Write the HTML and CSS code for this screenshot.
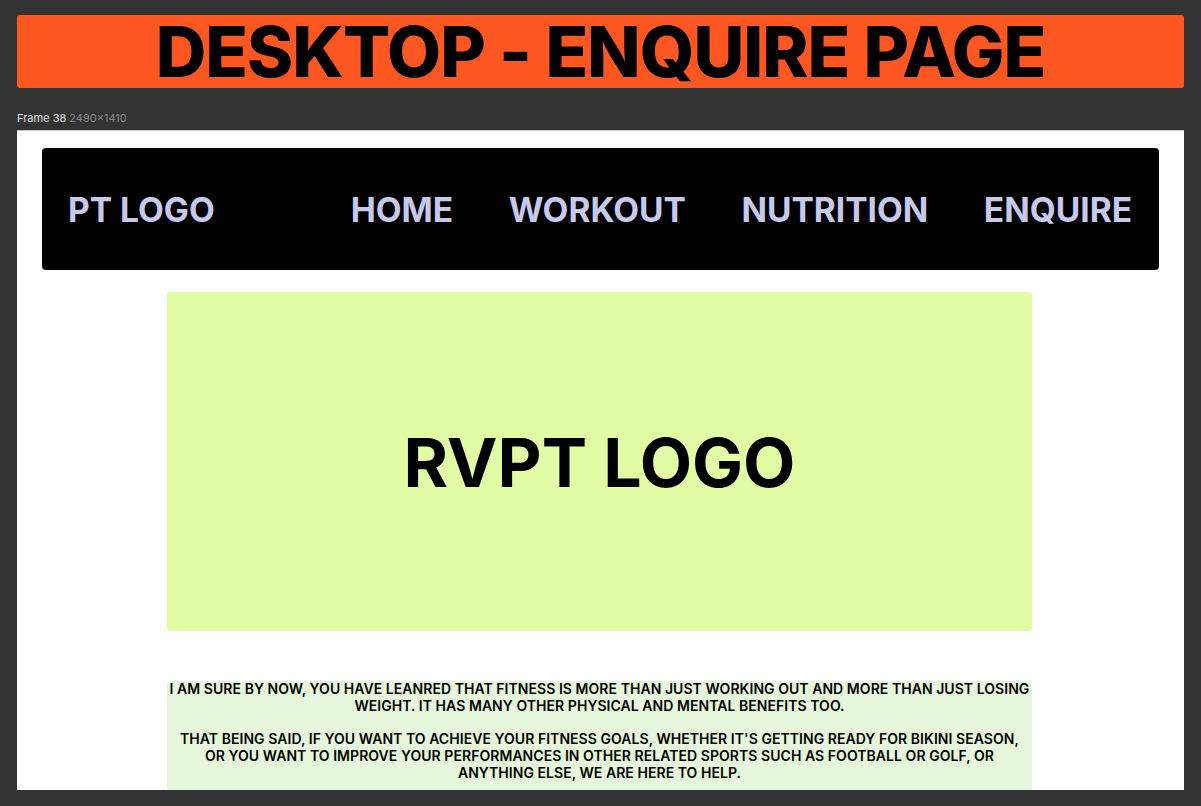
FILE: index.html
```html
<!DOCTYPE html>
<html>
<head>
<meta charset="utf-8">
<link rel="stylesheet" href="styles.css">
</head>
<body>
<div class="banner"><h1 class="banner-title">DESKTOP - ENQUIRE PAGE</h1></div>
<div class="frame-label"><span class="frame-name">Frame 38</span> <span class="frame-size">2490×1410</span></div>
<div class="frame">
  <nav class="nav">
    <div class="nav-logo">PT LOGO</div>
    <div class="nav-links">
      <a class="nav-link">HOME</a>
      <a class="nav-link">WORKOUT</a>
      <a class="nav-link">NUTRITION</a>
      <a class="nav-link">ENQUIRE</a>
    </div>
  </nav>
  <div class="hero"><div class="hero-text">RVPT LOGO</div></div>
  <div class="intro">
    <p class="intro-text">I AM SURE BY NOW, YOU HAVE LEANRED THAT FITNESS IS MORE THAN JUST WORKING OUT AND MORE THAN JUST LOSING WEIGHT. IT HAS MANY OTHER PHYSICAL AND MENTAL BENEFITS TOO.<br><br>THAT BEING SAID, IF YOU WANT TO ACHIEVE YOUR FITNESS GOALS, WHETHER IT'S GETTING READY FOR BIKINI SEASON,<br>OR YOU WANT TO IMPROVE YOUR PERFORMANCES IN OTHER RELATED SPORTS SUCH AS FOOTBALL OR GOLF, OR<br>ANYTHING ELSE, WE ARE HERE TO HELP.</p>
  </div>
</div>
</body>
</html>
```
FILE: styles.css
```css
* { box-sizing: border-box; }
html, body { margin: 0; padding: 0; }
body {
  background: #333333;
  font-family: Inter, "Noto Sans", sans-serif;
  width: 1201px;
  height: 806px;
  overflow: hidden;
}
.banner {
  margin: 15px 17px 0 17px;
  height: 73px;
  background: #ff5722;
  border-radius: 3px;
  display: flex;
  align-items: center;
  justify-content: center;
}
.banner-title {
  margin: 0;
  font-family: Inter, sans-serif;
  font-weight: 800;
  font-size: 70px;
  line-height: 1;
  color: #000;
  letter-spacing: -1px;
}
.frame-label {
  margin: 24px 17px 0 17px;
  height: 18px;
  font-size: 11px;
  line-height: 12px;
  font-family: Inter, "Noto Sans", sans-serif;
}
.frame-name { color: #e0e0e0; }
.frame-size { color: #8a8a8a; }
.frame {
  margin: 0 17px;
  height: 660px;
  background: #ffffff;
  border-top: 1px solid #c8c8c8;
  overflow: hidden;
  padding: 17px 25px 0 25px;
}
.nav {
  height: 122px;
  background: #000;
  border-radius: 4px;
  display: flex;
  align-items: center;
  justify-content: space-between;
  padding: 0 27px 0 26px;
}
.nav-logo, .nav-link {
  font-weight: 700;
  font-size: 33.5px;
  color: #c7c9ea;
  line-height: 1;
  padding-top: 3px;
}
.nav-links {
  display: flex;
  gap: 55.5px;
}
.hero {
  width: 865px;
  height: 339px;
  margin: 22px auto 0 auto;
  position: relative;
  left: -1px;
  background: #e2fca6;
  border-radius: 3px;
  display: flex;
  align-items: center;
  justify-content: center;
}
.hero-text {
  font-weight: 700;
  font-size: 68px;
  line-height: 1;
  color: #000;
}
.intro {
  width: 865px;
  margin: 50px auto 0 auto;
  position: relative;
  left: -1px;
  background: #e5f6db;
  border-radius: 3px;
  padding-bottom: 20px;
}
.intro-text {
  margin: 0;
  text-align: center;
  font-weight: 600;
  font-size: 14px;
  line-height: 16.7px;
  letter-spacing: 0.05px;
  color: #000;
}
```
